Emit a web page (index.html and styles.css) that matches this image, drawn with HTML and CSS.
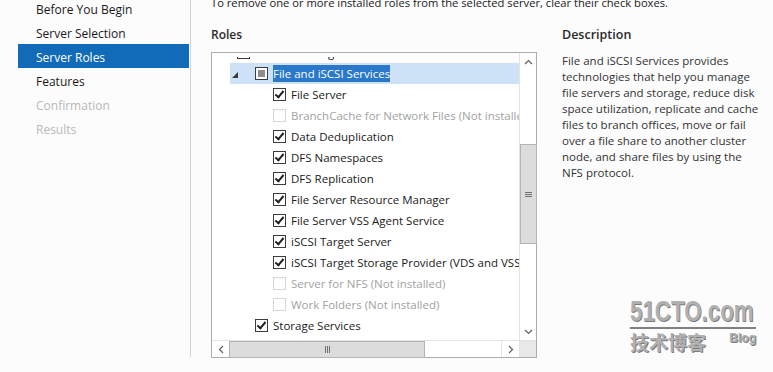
FILE: index.html
```html
<!DOCTYPE html>
<html lang="en">
<head>
    <meta charset="UTF-8">
    <title>Add Roles and Features Wizard</title>
    <link rel="stylesheet" href="styles.css">
</head>
<body>
    <div class="wizard">
        <nav class="steps">
            <div class="step">Before You Begin</div>
            <div class="step">Server Selection</div>
            <div class="step active">Server Roles</div>
            <div class="step">Features</div>
            <div class="step disabled">Confirmation</div>
            <div class="step disabled">Results</div>
        </nav>

        <main class="page">
            <p class="intro">To remove one or more installed roles from the selected server, clear their check boxes.</p>

            <div class="columns">
                <section class="roles">
                    <h2>Roles</h2>
                    <div class="listbox">
                        <div class="list-view">
                            <ul class="tree">
                                <li class="row lvl0">
                                    <span class="expander"></span>
                                    <span class="box"></span>
                                    <span class="label">File and Storage Services</span>
                                </li>
                                <li class="row lvl1 selected">
                                    <span class="expander">
                                        <svg width="6" height="6" viewBox="0 0 6 6"><polygon points="6,0 6,6 0,6" fill="#3a3a3a"/></svg>
                                    </span>
                                    <span class="box partial"></span>
                                    <span class="label"><span class="sel">File and iSCSI Services</span></span>
                                </li>
                                <li class="row lvl2"><span class="expander"></span><span class="box checked"></span><span class="label">File Server</span></li>
                                <li class="row lvl2 off"><span class="expander"></span><span class="box"></span><span class="label">BranchCache for Network Files (Not installed)</span></li>
                                <li class="row lvl2"><span class="expander"></span><span class="box checked"></span><span class="label">Data Deduplication</span></li>
                                <li class="row lvl2"><span class="expander"></span><span class="box checked"></span><span class="label">DFS Namespaces</span></li>
                                <li class="row lvl2"><span class="expander"></span><span class="box checked"></span><span class="label">DFS Replication</span></li>
                                <li class="row lvl2"><span class="expander"></span><span class="box checked"></span><span class="label">File Server Resource Manager</span></li>
                                <li class="row lvl2"><span class="expander"></span><span class="box checked"></span><span class="label">File Server VSS Agent Service</span></li>
                                <li class="row lvl2"><span class="expander"></span><span class="box checked"></span><span class="label">iSCSI Target Server</span></li>
                                <li class="row lvl2"><span class="expander"></span><span class="box checked"></span><span class="label">iSCSI Target Storage Provider (VDS and VSS hardware providers)</span></li>
                                <li class="row lvl2 off"><span class="expander"></span><span class="box"></span><span class="label">Server for NFS (Not installed)</span></li>
                                <li class="row lvl2 off"><span class="expander"></span><span class="box"></span><span class="label">Work Folders (Not installed)</span></li>
                                <li class="row lvl1"><span class="expander"></span><span class="box checked"></span><span class="label">Storage Services</span></li>
                            </ul>
                        </div>

                        <div class="vscroll">
                            <div class="arrow">
                                <svg width="9" height="6" viewBox="0 0 9 6"><polyline points="1,5 4.5,1.5 8,5" fill="none" stroke="#606060" stroke-width="1.2"/></svg>
                            </div>
                            <div class="track">
                                <div class="thumb">
                                    <svg width="7" height="7" viewBox="0 0 7 7"><path d="M0 1.5H7M0 3.5H7M0 5.5H7" stroke="#707070" stroke-width="1"/></svg>
                                </div>
                            </div>
                            <div class="arrow">
                                <svg width="9" height="6" viewBox="0 0 9 6"><polyline points="1,1 4.5,4.5 8,1" fill="none" stroke="#606060" stroke-width="1.2"/></svg>
                            </div>
                        </div>

                        <div class="hscroll">
                            <div class="arrow">
                                <svg width="6" height="9" viewBox="0 0 6 9"><polyline points="5,1 1.5,4.5 5,8" fill="none" stroke="#606060" stroke-width="1.2"/></svg>
                            </div>
                            <div class="track">
                                <div class="thumb">
                                    <svg width="7" height="7" viewBox="0 0 7 7"><path d="M1.5 0V7M3.5 0V7M5.5 0V7" stroke="#707070" stroke-width="1"/></svg>
                                </div>
                            </div>
                            <div class="arrow right">
                                <svg width="6" height="9" viewBox="0 0 6 9"><polyline points="1,1 4.5,4.5 1,8" fill="none" stroke="#606060" stroke-width="1.2"/></svg>
                            </div>
                        </div>

                        <div class="corner"></div>
                    </div>
                </section>

                <section class="description">
                    <h2>Description</h2>
                    <p>File and iSCSI Services provides technologies that help you manage file servers and storage, reduce disk space utilization, replicate and cache files to branch offices, move or fail over a file share to another cluster node, and share files by using the NFS protocol.</p>
                </section>
            </div>
        </main>
    </div>

    <div class="watermark">
        <div class="wm-site">51CTO.com</div>
        <div class="wm-line"></div>
        <div class="wm-bottom">
            <span class="wm-cn">技术博客</span>
            <span class="wm-blog">Blog</span>
        </div>
    </div>
</body>
</html>
```

FILE: styles.css
```css
body {
    margin: 0;
    background-color: #fcfcfc;
    font-family: "Open Sans", "Noto Sans", sans-serif;
    font-size: 11.5px;
    color: #1a1a1a;
    overflow: hidden;
}

.wizard {
    display: flex;
    height: 372px;
    overflow: hidden;
}

/* left step list */
.steps {
    width: 171px;
    height: 357px;
    padding-left: 18px;
    padding-right: 1px;
    border-right: 1px solid #d4d4d4;
    flex-shrink: 0;
}

.step {
    height: 24px;
    line-height: 20px;
    padding-top: 4px;
    padding-left: 18px;
    box-sizing: border-box;
    font-size: 12px;
}

.step:first-child {
    margin-top: -4px;
}

.step.active {
    background-color: #116bb8;
    color: #fff;
}

.step.disabled {
    color: #b9b9b9;
}

/* main area */
.page {
    padding-left: 20px;
}

.intro {
    margin: -5px 0 0;
    line-height: 16px;
    font-size: 11.2px;
    white-space: nowrap;
}

.columns {
    display: flex;
    gap: 25px;
    margin-top: 16px;
}

h2 {
    margin: 0;
    font-size: 12px;
    font-weight: 600;
    line-height: 16px;
    color: #2a2a2a;
}

.roles h2 {
    margin-bottom: 9px;
}

.description {
    width: 200px;
}

.description h2 {
    font-size: 12.5px;
}

.description p {
    margin: 10px 0 0;
    line-height: 16px;
    color: #333;
}

/* list box */
.listbox {
    width: 324px;
    height: 304px;
    border: 1px solid #acacac;
    background-color: #fff;
    display: grid;
    grid-template-columns: 1fr 17px;
    grid-template-rows: 1fr 17px;
}

.list-view {
    overflow: hidden;
    margin-top: 4px;
}

.tree {
    list-style: none;
    margin: -15px 0 0;
    padding: 0;
}

.row {
    display: flex;
    align-items: center;
    height: 21px;
    white-space: nowrap;
}

.row.lvl1 {
    margin-left: 18px;
}

.row.lvl2 {
    margin-left: 36px;
}

.row.selected {
    background-color: #cde2f6;
}

.expander {
    width: 25px;
    flex-shrink: 0;
    display: flex;
    align-items: center;
    padding-left: 2px;
    box-sizing: border-box;
}

.expander svg {
    display: block;
    margin-top: 2px;
}

.box {
    width: 13px;
    height: 13px;
    box-sizing: border-box;
    border: 1px solid #3c3c3c;
    background-color: #fff;
    flex-shrink: 0;
    margin-right: 5px;
    position: relative;
}

.box.checked::after {
    content: "";
    position: absolute;
    left: 3px;
    top: 0px;
    width: 3px;
    height: 7px;
    border-right: 2px solid #222;
    border-bottom: 2px solid #222;
    transform: rotate(40deg);
}

.box.partial::after {
    content: "";
    position: absolute;
    left: 2px;
    top: 2px;
    width: 7px;
    height: 7px;
    background-color: #8c8c8c;
}

.row.off .box {
    border-color: #d6d6d6;
}

.row.off .label {
    color: #a2a2a2;
}

.sel {
    background-color: #2a78c9;
    color: #fff;
    padding: 1px 0;
}

/* scrollbars */
.vscroll {
    border-left: 1px solid #e3e3e3;
    display: flex;
    flex-direction: column;
}

.vscroll .arrow {
    height: 17px;
    display: flex;
    align-items: center;
    justify-content: center;
}

.vscroll .track {
    flex: 1;
    padding-top: 74px;
}

.vscroll .thumb {
    height: 98px;
    width: 15px;
    border: 1px solid #b4b4b4;
    background-color: #dcdcdc;
    display: flex;
    align-items: center;
    justify-content: center;
}

.hscroll {
    border-top: 1px solid #e3e3e3;
    display: flex;
}

.hscroll .arrow {
    width: 17px;
    display: flex;
    align-items: center;
    justify-content: center;
}

.hscroll .arrow.right {
    border-left: 1px solid #e3e3e3;
}

.hscroll .track {
    flex: 1;
}

.hscroll .thumb {
    width: 194px;
    height: 15px;
    border: 1px solid #b4b4b4;
    background-color: #dcdcdc;
    display: flex;
    align-items: center;
    justify-content: center;
}

.corner {
    background-color: #e8e8e8;
    border-top: 1px solid #e3e3e3;
    border-left: 1px solid #e3e3e3;
}

/* watermark */
.watermark {
    position: absolute;
    left: 630px;
    top: 296px;
    width: 126px;
    font-family: "Liberation Sans", Arial, sans-serif;
    font-weight: bold;
    color: #b0b0b0;
    text-shadow: 1px 1px 0 #7a7a7a;
}

.wm-site {
    font-size: 29px;
    line-height: 30px;
    transform: scaleX(0.77);
    transform-origin: left center;
    white-space: nowrap;
}

.wm-line {
    height: 2px;
    background-color: #808080;
    margin-top: 1px;
}

.wm-bottom {
    display: flex;
    align-items: flex-start;
    justify-content: space-between;
    margin-top: 2px;
}

.wm-cn {
    font-family: "Noto Sans CJK SC", sans-serif;
    font-size: 19px;
    line-height: 22px;
}

.wm-blog {
    font-size: 12px;
    line-height: 14px;
    margin-top: 0;
}
```
